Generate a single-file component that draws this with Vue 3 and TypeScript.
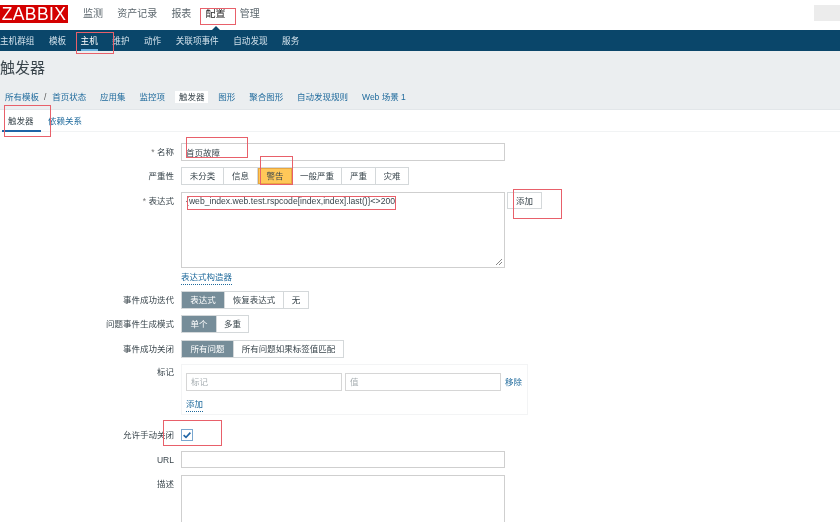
<script setup lang="ts">
const mainNav = ['监测', '资产记录', '报表', '配置', '管理']
const subNav = ['主机群组', '模板', '主机', '维护', '动作', '关联项事件', '自动发现', '服务']
const crumbs = ['应用集', '监控项', '触发器', '图形', '聚合图形', '自动发现规则', 'Web 场景 1']
const severity = ['未分类', '信息', '警告', '一般严重', '严重', '灾难']
const okEvent = ['表达式', '恢复表达式', '无']
const problemMode = ['单个', '多重']
const okClose = ['所有问题', '所有问题如果标签值匹配']
</script>

<template>
  <div class="page">
    <header class="top">
      <div class="logo">ZABBIX</div>
      <nav class="main-nav">
        <a v-for="n in mainNav" :key="n" :class="{ current: n === '配置' }">{{ n }}</a>
      </nav>
      <div class="search"></div>
    </header>
    <nav class="sub-nav">
      <a v-for="n in subNav" :key="n" :class="{ current: n === '主机' }">{{ n }}</a>
    </nav>
    <section class="head">
      <h1>触发器</h1>
      <div class="crumbs">
        <a class="c1">所有模板</a><span class="sep">/</span><a class="c2">首页状态</a>
        <a v-for="c in crumbs" :key="c" :class="{ active: c === '触发器' }">{{ c }}</a>
      </div>
    </section>
    <div class="tabs">
      <a class="tab on">触发器</a>
      <a class="tab">依赖关系</a>
    </div>

    <form class="form">
      <div class="row r-name">
        <label><i>*</i> 名称</label>
        <input class="field" value="首页故障" />
      </div>
      <div class="row r6">
        <label>严重性</label>
        <div class="seg sev">
          <span v-for="s in severity" :key="s" :class="{ warn: s === '警告' }">{{ s }}</span>
        </div>
      </div>
      <div class="row r7">
        <label><i>*</i> 表达式</label>
        <div class="expr">{web_index.web.test.rspcode[index,index].last()}&lt;&gt;200
          <svg class="grip" width="8" height="8" viewBox="0 0 8 8"><path d="M1 7L7 1M4 7L7 4" stroke="#888" stroke-width="1" fill="none" /></svg>
        </div>
        <button type="button" class="add">添加</button>
      </div>
      <div class="row r-link">
        <label></label>
        <a class="link dotted">表达式构造器</a>
      </div>
      <div class="row r-ok">
        <label>事件成功迭代</label>
        <div class="seg choice c-ok">
          <span v-for="s in okEvent" :key="s" :class="{ sel: s === '表达式' }">{{ s }}</span>
        </div>
      </div>
      <div class="row r6">
        <label>问题事件生成模式</label>
        <div class="seg choice c-mode">
          <span v-for="s in problemMode" :key="s" :class="{ sel: s === '单个' }">{{ s }}</span>
        </div>
      </div>
      <div class="row r7">
        <label>事件成功关闭</label>
        <div class="seg choice c-close">
          <span v-for="s in okClose" :key="s" :class="{ sel: s === '所有问题' }">{{ s }}</span>
        </div>
      </div>
      <div class="row r6">
        <label class="tag-label">标记</label>
        <div class="tags">
          <div class="tag-row">
            <input class="tag-input" placeholder="标记" />
            <input class="tag-input" placeholder="值" />
            <a class="link">移除</a>
          </div>
          <a class="link dotted add-tag">添加</a>
        </div>
      </div>
      <div class="row r-check">
        <label>允许手动关闭</label>
        <span class="check">
          <svg width="10" height="10" viewBox="0 0 10 10"><path d="M1.6 5.2L4 7.4L8.4 2.6" stroke="#1f65a6" stroke-width="1.6" fill="none" /></svg>
        </span>
      </div>
      <div class="row r-url">
        <label>URL</label>
        <input class="field url" />
      </div>
      <div class="row r6">
        <label>描述</label>
        <div class="desc"></div>
      </div>
    </form>

    <!-- hand-drawn review marks lying over the screenshot -->
    <i class="mark" style="left:200px;top:8px;width:36px;height:17px"></i>
    <i class="mark" style="left:76px;top:32px;width:38px;height:22px"></i>
    <i class="mark" style="left:4px;top:105px;width:47px;height:32px"></i>
    <i class="mark" style="left:186px;top:137px;width:62px;height:21px"></i>
    <i class="mark" style="left:260px;top:156px;width:33px;height:29px"></i>
    <i class="mark" style="left:187px;top:196px;width:209px;height:14px"></i>
    <i class="mark" style="left:513px;top:189px;width:49px;height:30px"></i>
    <i class="mark" style="left:163px;top:420px;width:59px;height:26px"></i>
  </div>
</template>

<style>
html, body { margin: 0; background: #fff; }
</style>

<style scoped>
.page {
  position: relative;
  width: 840px;
  height: 522px;
  overflow: hidden;
  background: #fff;
  color: #3a464d;
  font: 8.5px/12px "Liberation Sans", "Noto Sans CJK SC", sans-serif;
  filter: blur(.3px);
}
a { color: #1f6a9c; }
.top { display: flex; align-items: flex-start; height: 30px; padding-top: 5px; box-sizing: border-box; }
.logo {
  width: 68px; height: 18px; background: #d40000; color: #fff;
  font: 17.5px/18px "Liberation Sans", sans-serif; letter-spacing: .4px; text-align: center;
}
.main-nav { display: flex; gap: 14.2px; margin-left: 15px; padding-top: 1px; font-size: 10px; line-height: 16px; }
.main-nav a { color: #5b666d; position: relative; }
.main-nav a.current { color: #222; }
.main-nav a.current::after {
  content: ""; position: absolute; left: 50%; margin-left: -4px; top: 20px;
  border: 4px solid transparent; border-top: 0; border-bottom-color: #0a466a;
}
.search { margin-left: auto; width: 26px; height: 16px; background: #ececec; }
.sub-nav {
  display: flex; gap: 14.5px; height: 21px; background: #0a466a;
  line-height: 23px; font-size: 8.6px;
}
.sub-nav a { color: #d3e2ec; position: relative; height: 21px; }
.sub-nav a.current { color: #fff; }
.sub-nav a.current::after {
  content: ""; position: absolute; left: 0; right: 0; bottom: 0; height: 2px; background: #6fb3e0;
}
.head { height: 59px; background: #ebeef0; box-sizing: border-box; border-bottom: 1px solid #e2e6e9; }
h1 { margin: 0; padding-top: 7px; font-weight: 400; font-size: 15px; line-height: 20px; color: #39444b; }
.crumbs { display: flex; gap: 13.9px; align-items: center; margin-top: 13px; padding-left: 5px; height: 12px; }
.crumbs .sep { margin: 0 -8px 0 -9px; color: #555; }
.crumbs a.active { background: #fff; color: #3a464d; padding: 0 4px; margin: 0 -4px; }
.tabs { display: flex; height: 22px; box-sizing: border-box; border-bottom: 1px solid #f1f3f4; padding-left: 2px; }
.tab { padding: 5px 7px 0 7px; height: 22px; box-sizing: border-box; }
.tab.on { width: 39px; padding-left: 6px; color: #3a464d; border-bottom: 2px solid #1f65a6; }
.form { padding-top: 11px; }
.row { display: flex; column-gap: 7px; align-items: flex-start; }
.row label { width: 174px; flex: none; text-align: right; line-height: 18px; }
.row label i { font-style: normal; color: #777; }
.r6 { margin-top: 6px; }
.r7 { margin-top: 7px; }
.field {
  width: 324px; height: 18px; box-sizing: border-box; padding: 0 4px; border: 1px solid #cfcfcf;
  font: inherit; color: #3a464d; outline: none; border-radius: 0;
}
.seg { display: flex; height: 18px; box-sizing: border-box; border: 1px solid #d4d8da; line-height: 16px; }
.seg span { flex: none; text-align: center; border-left: 1px solid #d4d8da; box-sizing: border-box; }
.seg span:first-child { border-left: 0; }
.sev { width: 228px; }
.sev span:nth-child(1) { width: 41px; }
.sev span:nth-child(2) { width: 34px; }
.sev span:nth-child(3) { width: 35px; }
.sev span:nth-child(4) { width: 49px; }
.sev span:nth-child(5) { width: 34px; }
.sev span:nth-child(6) { width: 33px; }
.warn { background: #ffc859; box-shadow: inset 0 0 0 1px #e8a63f; }
.sel { background: #768d99; color: #fff; }
.c-ok { width: 128px; }
.c-ok span:nth-child(1) { width: 42px; }
.c-ok span:nth-child(2) { width: 59px; }
.c-ok span:nth-child(3) { width: 25px; }
.c-mode { width: 68px; }
.c-mode span:nth-child(1) { width: 34px; }
.c-mode span:nth-child(2) { width: 32px; }
.c-close { width: 163px; }
.c-close span:nth-child(1) { width: 51px; }
.c-close span:nth-child(2) { width: 110px; }
.expr {
  position: relative; width: 324px; height: 76px; box-sizing: border-box; padding: 1px 4px;
  border: 1px solid #cfcfcf; line-height: 14px; color: #3a464d; font-size: 8.65px;
}
.grip { position: absolute; right: 1px; bottom: 1px; }
.add {
  width: 35px; height: 17px; margin-left: -5px; padding: 0; box-sizing: border-box;
  background: #fff; border: 1px solid #d4d8da; color: #3a464d; font: inherit; line-height: 14px;
}
.r-link { margin-top: 4px; height: 15px; }
.link { color: #1f6a9c; }
.dotted { border-bottom: 1px dotted #1f6a9c; line-height: 11px; height: 12px; }
.r-ok { margin-top: 4px; }
.tag-label { line-height: 16px !important; }
.tags {
  width: 347px; height: 51px; box-sizing: border-box; padding: 8px 0 0 4px;
  border: 1px solid #f3f4f5;
}
.tag-row { display: flex; align-items: center; gap: 3px; }
.tag-input {
  width: 156px; height: 18px; box-sizing: border-box; padding: 0 4px; border: 1px solid #d6d6d6;
  font: inherit; outline: none; border-radius: 0;
}
.tag-input::placeholder { color: #a8afb3; }
.tag-row .link { margin-left: 1px; }
.add-tag { display: inline-block; margin-top: 8px; }
.r-check { margin-top: 13px; align-items: center; }
.r-check label { line-height: 12px; padding-top: 1px; }
.check {
  display: flex; align-items: center; justify-content: center;
  width: 12px; height: 12px; box-sizing: border-box; border: 1px solid #7aa7cf; background: #fff;
}
.r-url { margin-top: 10px; }
.url { height: 17px; }
.desc { width: 324px; height: 80px; box-sizing: border-box; border: 1px solid #cfcfcf; }
.mark { position: absolute; box-sizing: border-box; border: 1px solid #e8606a; pointer-events: none; }
</style>
